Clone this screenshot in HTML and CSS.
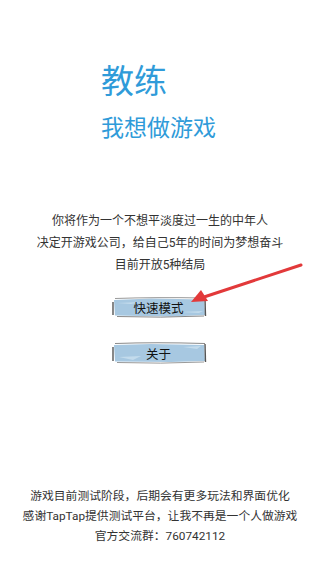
FILE: index.html
```html
<!DOCTYPE html>
<html lang="zh">
<head>
<meta charset="utf-8">
<link rel="stylesheet" href="styles.css">
</head>
<body>
<div class="page">
  <header class="title">
    <div class="title-main">教练</div>
    <div class="title-sub">我想做游戏</div>
  </header>
  <section class="intro">
    <p>你将作为一个不想平淡度过一生的中年人</p>
    <p>决定开游戏公司，给自己5年的时间为梦想奋斗</p>
    <p>目前开放5种结局</p>
  </section>
  <nav class="menu">
    <div class="btn">
      <svg class="btn-bg" viewBox="0 0 96 24" preserveAspectRatio="none">
        <path d="M3 5 L40 3.5 L93 4.5 L94 20 L60 21.5 L4 20.5 Z" fill="#a7c8e1"/>
        <path d="M6 8 L30 7 L20 9 Z M70 17 L92 16 L88 18 Z" fill="#c3dbec"/>
        <path d="M4 3.5 Q45 2 94 3" stroke="#9a9a9a" stroke-width="1" fill="none"/>
        <path d="M6 21.5 Q50 23 93 21" stroke="#8a8a8a" stroke-width="1" fill="none"/>
        <path d="M2 7 L2 20" stroke="#555" stroke-width="1.4" fill="none"/>
        <path d="M94 4 L94.5 21" stroke="#555" stroke-width="1.4" fill="none"/>
      </svg>
      <span class="btn-label">快速模式</span>
    </div>
    <div class="btn">
      <svg class="btn-bg" viewBox="0 0 96 24" preserveAspectRatio="none">
        <path d="M3 4 L40 3 L93 4 L94 20 L60 21 L4 20.5 Z" fill="#a7c8e1"/>
        <path d="M8 16 L30 15 L22 19 Z M72 6 L90 5 L86 8 Z" fill="#c3dbec"/>
        <path d="M4 2.5 Q45 1 94 2.5" stroke="#8a8a8a" stroke-width="1" fill="none"/>
        <path d="M6 21.5 Q50 23 93 21" stroke="#9a9a9a" stroke-width="1" fill="none"/>
        <path d="M2 6 L2 20" stroke="#555" stroke-width="1.4" fill="none"/>
        <path d="M94 3 L94.5 21" stroke="#555" stroke-width="1.4" fill="none"/>
      </svg>
      <span class="btn-label">关于</span>
    </div>
  </nav>
  <footer class="notes">
    <p>游戏目前测试阶段，后期会有更多玩法和界面优化</p>
    <p>感谢TapTap提供测试平台，让我不再是一个人做游戏</p>
    <p>官方交流群：760742112</p>
  </footer>
  <svg class="arrow" viewBox="0 0 320 568" width="320" height="568">
    <line x1="301" y1="265" x2="204" y2="297" stroke="#e2393a" stroke-width="3" stroke-linecap="round"/>
    <path d="M191 302 L201 290 L208 301 Z" fill="#e2393a"/>
  </svg>
</div>
</body>
</html>
```
FILE: styles.css
```css
* { box-sizing: border-box; }
html, body { margin: 0; padding: 0; background: #fff; }
body { font-family: Roboto, "Noto Sans CJK SC", sans-serif; color: #333; }
.page {
  position: relative;
  width: 320px;
  height: 568px;
  display: flex;
  flex-direction: column;
  overflow: hidden;
}
.title {
  padding: 62px 0 0 101px;
  color: #2f9bd9;
}
.title-main {
  font-size: 33px;
  line-height: 40px;
}
.title-sub {
  font-size: 23px;
  line-height: 30px;
  margin-top: 12px;
}
.intro {
  margin-top: 66px;
  text-align: center;
  font-size: 12px;
  line-height: 22px;
}
.intro p, .notes p { margin: 0; }
.menu {
  margin-top: 19px;
  display: flex;
  flex-direction: column;
  align-items: center;
  gap: 22px;
}
.btn {
  position: relative;
  width: 96px;
  height: 24px;
  margin-left: -3px;
  display: flex;
  align-items: center;
  justify-content: center;
}
.btn-bg {
  position: absolute;
  left: 0;
  top: 0;
  width: 100%;
  height: 100%;
}
.btn-label {
  position: relative;
  font-size: 12.5px;
  color: #111;
}
.notes {
  margin-top: auto;
  margin-bottom: 22px;
  text-align: center;
  font-size: 11.8px;
  line-height: 20px;
}
.arrow {
  position: absolute;
  left: 0;
  top: 0;
  pointer-events: none;
}
```
